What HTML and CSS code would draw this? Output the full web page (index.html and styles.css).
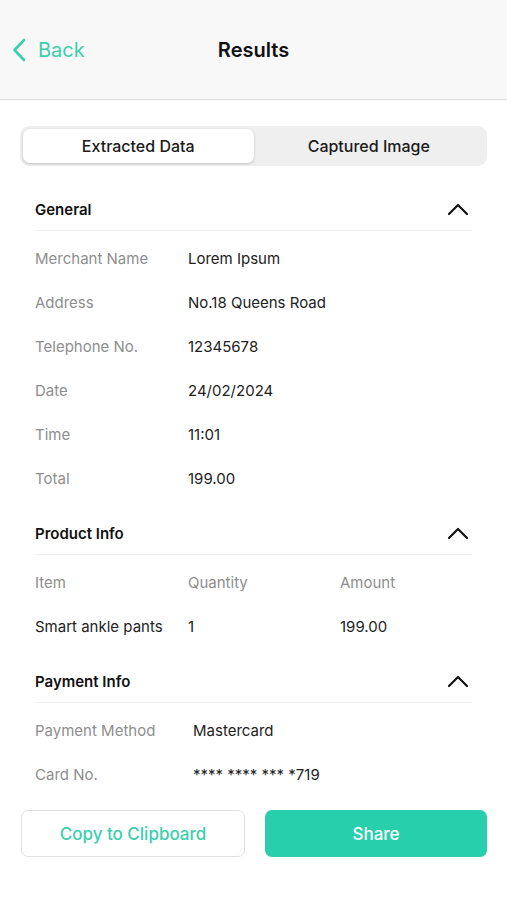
FILE: index.html
```html
<!DOCTYPE html>
<html lang="en">
<head>
  <meta charset="UTF-8">
  <meta name="viewport" content="width=device-width, initial-scale=1.0">
  <title>Results</title>
  <link rel="stylesheet" href="styles.css">
</head>
<body>
  <header class="topbar">
    <a class="back" href="#">
      <svg class="back-icon" width="14" height="24" viewBox="0 0 14 24" fill="none">
        <path d="M12 2 L2.5 12 L12 22" stroke="currentColor" stroke-width="2.6" stroke-linecap="round" stroke-linejoin="round"/>
      </svg>
      <span>Back</span>
    </a>
    <h1 class="title">Results</h1>
    <span></span>
  </header>

  <main class="content">
    <div class="segment">
      <button class="segment-tab active">Extracted Data</button>
      <button class="segment-tab">Captured Image</button>
    </div>

    <section class="block">
      <div class="block-head">
        <h2>General</h2>
        <svg class="chev" width="22" height="14" viewBox="0 0 22 14" fill="none">
          <path d="M2 12 L11 3 L20 12" stroke="#111" stroke-width="2.2" stroke-linecap="round" stroke-linejoin="round"/>
        </svg>
      </div>
      <div class="rows">
        <div class="row"><span class="label">Merchant Name</span><span class="value">Lorem Ipsum</span></div>
        <div class="row"><span class="label">Address</span><span class="value">No.18 Queens Road</span></div>
        <div class="row"><span class="label">Telephone No.</span><span class="value">12345678</span></div>
        <div class="row"><span class="label">Date</span><span class="value">24/02/2024</span></div>
        <div class="row"><span class="label">Time</span><span class="value">11:01</span></div>
        <div class="row"><span class="label">Total</span><span class="value">199.00</span></div>
      </div>
    </section>

    <section class="block">
      <div class="block-head">
        <h2>Product Info</h2>
        <svg class="chev" width="22" height="14" viewBox="0 0 22 14" fill="none">
          <path d="M2 12 L11 3 L20 12" stroke="#111" stroke-width="2.2" stroke-linecap="round" stroke-linejoin="round"/>
        </svg>
      </div>
      <div class="rows">
        <div class="row three"><span class="label">Item</span><span class="label">Quantity</span><span class="label">Amount</span></div>
        <div class="row three"><span class="value">Smart ankle pants</span><span class="value">1</span><span class="value">199.00</span></div>
      </div>
    </section>

    <section class="block">
      <div class="block-head">
        <h2>Payment Info</h2>
        <svg class="chev" width="22" height="14" viewBox="0 0 22 14" fill="none">
          <path d="M2 12 L11 3 L20 12" stroke="#111" stroke-width="2.2" stroke-linecap="round" stroke-linejoin="round"/>
        </svg>
      </div>
      <div class="rows">
        <div class="row wide"><span class="label">Payment Method</span><span class="value">Mastercard</span></div>
        <div class="row wide"><span class="label">Card No.</span><span class="value">**** **** *** *719</span></div>
      </div>
    </section>
  </main>

  <footer class="actions">
    <button class="btn btn-outline">Copy to Clipboard</button>
    <button class="btn btn-primary">Share</button>
  </footer>
</body>
</html>
```

FILE: styles.css
```css
* {
  box-sizing: border-box;
}
body {
  margin: 0;
  font-family: Inter, "Noto Sans", Arial, sans-serif;
  color: #1c1c1c;
  background: #fff;
}
.topbar {
  height: 100px;
  background: #f8f8f8;
  border-bottom: 1px solid #dcdcdc;
  display: grid;
  grid-template-columns: 1fr auto 1fr;
  align-items: center;
  padding: 0 12px;
}
.back {
  display: flex;
  align-items: center;
  gap: 12px;
  color: #3ccfac;
  text-decoration: none;
  font-size: 20px;
}
.back-icon {
  display: block;
}
.title {
  margin: 0;
  font-size: 20px;
  font-weight: 600;
  color: #111;
}
.content {
  padding: 26px 20px 0;
}
.segment {
  display: flex;
  height: 40px;
  padding: 3px;
  background: #efefef;
  border-radius: 9px;
  margin-bottom: 22px;
}
.segment-tab {
  flex: 1;
  border: none;
  background: transparent;
  font-family: inherit;
  font-size: 16px;
  font-weight: 500;
  color: #1a1a1a;
  border-radius: 7px;
  padding: 0;
}
.segment-tab.active {
  background: #fff;
  box-shadow: 0 1px 3px rgba(0, 0, 0, 0.18);
}
.block {
  padding: 0 15px;
  margin-bottom: 12px;
}
.block-head {
  height: 43px;
  display: flex;
  align-items: center;
  justify-content: space-between;
  border-bottom: 1px solid #efefef;
}
.block-head h2 {
  margin: 0;
  font-size: 15px;
  font-weight: 600;
  color: #111;
}
.chev {
  margin-right: 3px;
}
.rows {
  padding-top: 5px;
}
.row {
  height: 44px;
  display: grid;
  grid-template-columns: 153px 1fr;
  align-items: center;
  font-size: 15px;
}
.row.three {
  grid-template-columns: 153px 152px 1fr;
}
.row.wide {
  grid-template-columns: 158px 1fr;
}
.label {
  color: #8e8e8e;
}
.value {
  color: #222;
}
.actions {
  display: flex;
  gap: 20px;
  padding: 2px 20px 0 21px;
}
.btn {
  flex: 1;
  height: 47px;
  border-radius: 7px;
  font-family: inherit;
  font-size: 17px;
  font-weight: 500;
}
.btn-outline {
  background: #fff;
  border: 1.5px solid #e0e0e0;
  color: #3ccfac;
}
.btn-primary {
  background: #27cfad;
  border: none;
  color: #fff;
}
```
